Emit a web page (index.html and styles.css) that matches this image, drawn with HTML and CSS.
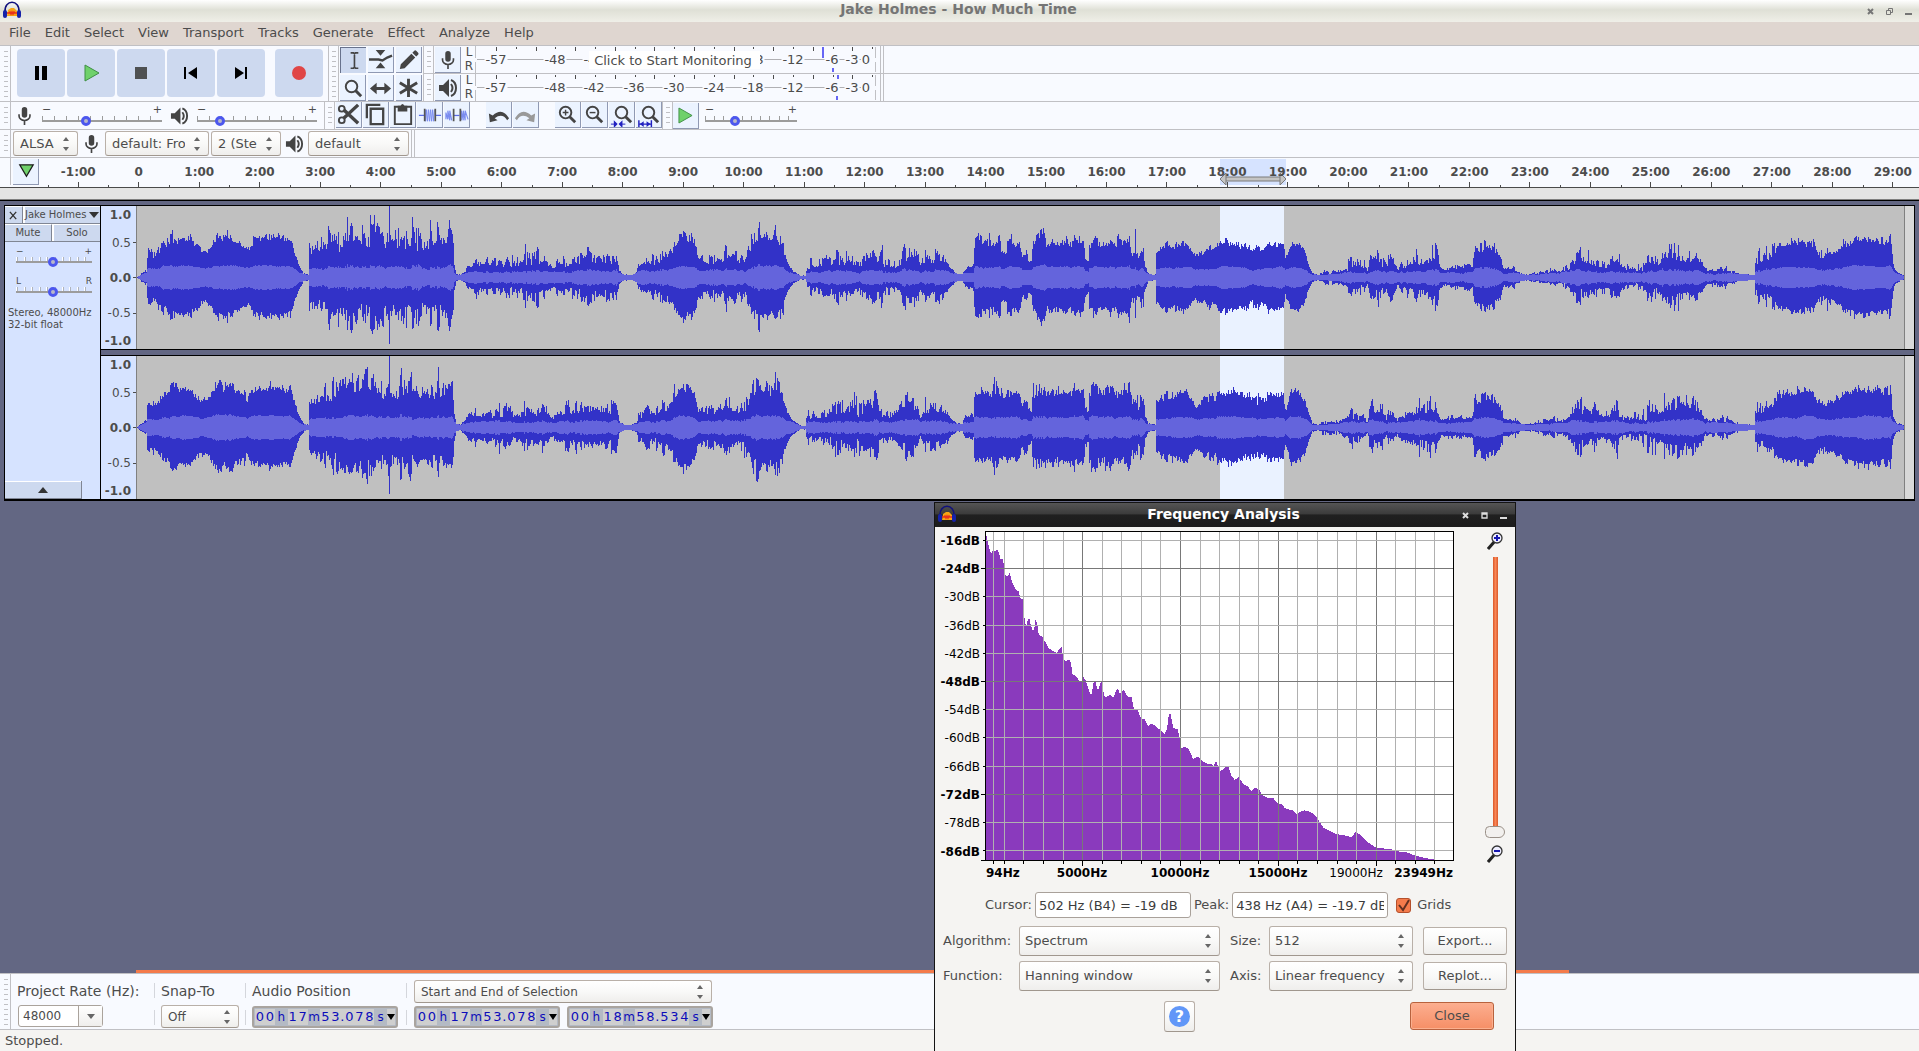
FILE: index.html
```html
<!DOCTYPE html>
<html lang="en">
<head>
<meta charset="utf-8">
<title>Jake Holmes - How Much Time</title>
<link rel="stylesheet" href="styles.css">
</head>
<body>
<svg class="defs" aria-hidden="true">
  <symbol id="logo" viewBox="0 0 20 20">
    <path d="M3 11C2 -2 18 -2 17 11" fill="none" stroke="#10107c" stroke-width="1.5"/>
    <path d="M5 15l1-6 3-2 3 0 3 3 0 5z" fill="#f7a414"/>
    <path d="M5 12h2l1-1 1 2 1-2 1 2 1-2 1 1h3" fill="none" stroke="#e8301c" stroke-width="1.6"/>
    <rect x="1" y="9" width="4" height="8" rx="2" fill="#1622a8"/><rect x="15" y="9" width="4" height="8" rx="2" fill="#1622a8"/>
  </symbol>
  <symbol id="mic" viewBox="0 0 18 22"><rect x="6" y="1" width="6" height="12" rx="3"/><path d="M3 9v2a6 5 0 0 0 12 0V9M9 16v5" fill="none" stroke="currentColor" stroke-width="1.8"/></symbol>
  <symbol id="speaker" viewBox="0 0 20 20"><path d="M1 7h4l6-6v18l-6-6H1z"/><path d="M13 6q3 4 0 8M13 2q5 2 5 8t-5 8" fill="none" stroke="currentColor" stroke-width="2"/></symbol>
  <symbol id="ibeam" viewBox="0 0 26 26"><path d="M10 5h3l1 1 1-1h3M10 21h3l1-1 1 1h3M14 6v14" fill="none" stroke="currentColor" stroke-width="1.7"/></symbol>
  <symbol id="envelope" viewBox="0 0 26 26"><path d="M8 3h10l-5 6zM8 22h10l-5-6z"/><path d="M1 13h10l4 1 5-3 5-2" fill="none" stroke="currentColor" stroke-width="2.500"/></symbol>
  <symbol id="pencil" viewBox="0 0 26 26"><path d="M4 23l1-5L16 7l4 4L9 22zM17 6l2-2q1-1 2 0l2 2q1 1 0 2l-2 2z"/></symbol>
  <symbol id="lens" viewBox="0 0 26 26"><circle cx="11" cy="11" r="6" fill="none" stroke="currentColor" stroke-width="2"/><path d="M15 15l6 6" stroke="currentColor" stroke-width="3"/></symbol>
  <symbol id="shift" viewBox="0 0 26 26"><path d="M2 14l7-6v4.500h8V8l7 6-7 6v-4.500H9V20z"/></symbol>
  <symbol id="star" viewBox="0 0 26 26"><path d="M13 4v19M4 8l18 11M22 8L4 19" stroke="currentColor" stroke-width="3"/></symbol>
  <symbol id="cut" viewBox="0 0 26 26"><path d="M23 3L8 17M23 22L8 8" stroke="currentColor" stroke-width="3.500"/><circle cx="6" cy="7" r="3" fill="none" stroke="currentColor" stroke-width="2"/><circle cx="6" cy="19" r="3" fill="none" stroke="currentColor" stroke-width="2"/></symbol>
  <symbol id="copy" viewBox="0 0 26 26"><path d="M4 17V3h14M8 7h13v16H8z" fill="none" stroke="currentColor" stroke-width="2.400"/></symbol>
  <symbol id="paste" viewBox="0 0 26 26"><path d="M5 5h17v18H5z" fill="none" stroke="currentColor" stroke-width="2"/><path d="M8 4h3q2-4 4 0h3v6H8z"/></symbol>
  <symbol id="trim" viewBox="0 0 26 26"><path d="M2 14h6M19 14h6" stroke="#5b6be6" stroke-width="1.300"/><path d="M9 8v12l1-12 1 12 1-12 1 12 1-12 1 12 1-12 1 12 1-12" fill="none" stroke="#7b8cf0" stroke-width="1"/><path d="M8 7v13M19 7v13" stroke="#555" stroke-width="1.800"/></symbol>
  <symbol id="silence" viewBox="0 0 26 26"><path d="M2 18v-7l2 7V9l2 10V9l2 10M18 19V9l2 10V9l2 10V9l3 9" fill="none" stroke="#7b8cf0" stroke-width="1.200"/><path d="M10 14h6" stroke="#5b6be6" stroke-width="1.300"/><path d="M10 7v13M17 7v13" stroke="#555" stroke-width="1.800"/></symbol>
  <symbol id="undo" viewBox="0 0 26 26"><path d="M3 12l1 9 8-2-3-2q8-6 13 2l2-2Q17 5 7 14z"/></symbol>
  <symbol id="redo" viewBox="0 0 26 26"><path d="M23 12l-1 9-8-2 3-2q-8-6-13 2l-2-2Q9 5 19 14z"/></symbol>
  <symbol id="play" viewBox="0 0 16 18"><path d="M1 1l14 8-14 8z" fill="#6fd16b" stroke="#3f8f45" stroke-width="1"/></symbol>
  <symbol id="dlens" viewBox="0 0 16 18"><path d="M8 9l-7 8" stroke="#222" stroke-width="3"/><circle cx="10" cy="6" r="5" fill="#eef" stroke="#333" stroke-width="1.300"/></symbol>
</svg>

<header class="titlebar">
  <svg class="logo"><use href="#logo"/></svg>
  <h1>Jake Holmes - How Much Time</h1>
  <div class="wm">
    <svg viewBox="0 0 7 7"><path d="M1 1l5 5M6 1L1 6" stroke="currentColor" stroke-width="2"/></svg>
    <svg viewBox="0 0 7 7"><path d="M.5 2.500h4v4h-4zM2.500 2.500v-2h4v4h-2" fill="none" stroke="currentColor"/></svg>
    <svg viewBox="0 0 7 7"><path d="M0 6h7" stroke="currentColor" stroke-width="2"/></svg>
  </div>
</header>
<nav class="menu">
  <a href="#">File</a><a href="#">Edit</a><a href="#">Select</a><a href="#">View</a><a href="#">Transport</a><a href="#">Tracks</a><a href="#">Generate</a><a href="#">Effect</a><a href="#">Analyze</a><a href="#">Help</a>
</nav>

<div class="dock">
  <i class="grip"></i>
  <div class="transport">
    <button aria-label="Pause"><svg viewBox="0 0 48 48"><path d="M18 17h4v14h-4zM25 17h5v14h-5z" fill="#000"/></svg></button>
    <button aria-label="Play"><svg viewBox="0 0 48 48"><path d="M18 16l14 8-14 8z" fill="#6fd16b" stroke="#3f8f45"/></svg></button>
    <button aria-label="Stop"><svg viewBox="0 0 48 48"><path d="M18 18h12v12H18z" fill="#4f5152"/></svg></button>
    <button aria-label="Skip to start"><svg viewBox="0 0 48 48"><path d="M17 18h2v12h-2zM30 18v12l-9-6z" fill="#000"/></svg></button>
    <button aria-label="Skip to end"><svg viewBox="0 0 48 48"><path d="M28 18h2v12h-2zM18 18v12l9-6z" fill="#000"/></svg></button>
    <button class="record" aria-label="Record"><svg viewBox="0 0 48 48"><circle cx="24" cy="24" r="7" fill="#e04646"/></svg></button>
  </div>
  <i class="grip"></i>
  <div class="tools">
    <button class="tb on" aria-label="Selection"><svg><use href="#ibeam"/></svg></button>
    <button class="tb" aria-label="Envelope"><svg><use href="#envelope"/></svg></button>
    <button class="tb" aria-label="Draw"><svg><use href="#pencil"/></svg></button>
    <button class="tb" aria-label="Zoom"><svg viewBox="0 0 26 26"><use href="#lens" x="1" y="1" width="26" height="26"/></svg></button>
    <button class="tb" aria-label="Time shift"><svg><use href="#shift"/></svg></button>
    <button class="tb" aria-label="Multi"><svg><use href="#star"/></svg></button>
  </div>
  <div class="meters">
    <div class="meterbar"><i class="grip"></i><button class="tb" aria-label="Record meter"><svg class="s20"><use href="#mic"/></svg></button><div class="lr"><span>L</span><span>R</span></div><svg class="meter" data-kind="rec"></svg><i class="end"></i></div>
    <div class="meterbar"><i class="grip"></i><button class="tb" aria-label="Playback meter"><svg class="s20"><use href="#speaker"/></svg></button><div class="lr"><span>L</span><span>R</span></div><svg class="meter" data-kind="play"></svg><i class="end"></i></div>
  </div>
</div>

<div class="dock">
  <i class="grip"></i>
  <div class="mixer">
    <svg class="ico"><use href="#mic"/></svg>
    <label class="slider"><span>−</span><span>+</span><input type="range" aria-label="Recording volume" min="0" max="100" value="35"></label>
    <svg class="ico"><use href="#speaker"/></svg>
    <label class="slider"><span>−</span><span>+</span><input type="range" aria-label="Playback volume" min="0" max="100" value="16"></label>
  </div>
  <i class="grip"></i>
  <div class="edit">
    <button class="tb" aria-label="Cut"><svg><use href="#cut"/></svg></button>
    <button class="tb" aria-label="Copy"><svg><use href="#copy"/></svg></button>
    <button class="tb" aria-label="Paste"><svg><use href="#paste"/></svg></button>
    <button class="tb" aria-label="Trim"><svg><use href="#trim"/></svg></button>
    <button class="tb" aria-label="Silence"><svg><use href="#silence"/></svg></button>
    <button class="tb apart" aria-label="Undo"><svg><use href="#undo"/></svg></button>
    <button class="tb dim" aria-label="Redo"><svg><use href="#redo"/></svg></button>
    <button class="tb apart" aria-label="Zoom in"><svg viewBox="0 0 26 26"><use href="#lens" width="26" height="26"/><path d="M8 11h6M11 8v6" stroke="currentColor" stroke-width="1.500"/></svg></button>
    <button class="tb" aria-label="Zoom out"><svg viewBox="0 0 26 26"><use href="#lens" width="26" height="26"/><path d="M8 11h6" stroke="currentColor" stroke-width="1.500"/></svg></button>
    <button class="tb" aria-label="Fit selection"><svg viewBox="0 0 26 26"><use href="#lens" x="2" width="26" height="26"/><path d="M2 23h5M11 23h6" stroke="#2020c0"/><path d="M5 19l4 4-4 4zM14 19l-4 4 4 4z" fill="#2020c0"/></svg></button>
    <button class="tb" aria-label="Fit project"><svg viewBox="0 0 26 26"><use href="#lens" x="2" width="26" height="26"/><path d="M3 19v7M16 19v7M3 23h13" stroke="#2020c0" stroke-width="1.500"/><path d="M4 23l4-3v6zM15 23l-4-3v6z" fill="#2020c0"/></svg></button>
  </div>
  <i class="grip"></i>
  <div class="speed">
    <button class="tb" aria-label="Play at speed"><svg class="s18"><use href="#play"/></svg></button>
    <label class="slider"><span>−</span><span>+</span><input type="range" aria-label="Playback speed" min="0" max="100" value="30"></label>
  </div>
</div>

<div class="dock device">
  <i class="grip"></i>
  <select class="sel w-host" aria-label="Audio host"><option>ALSA</option></select>
  <svg class="ico"><use href="#mic"/></svg>
  <select class="sel w-rec" aria-label="Recording device"><option>default: Front Mic:0</option></select>
  <select class="sel w-ch" aria-label="Recording channels"><option>2 (Stereo) Recording Channels</option></select>
  <svg class="ico"><use href="#speaker"/></svg>
  <select class="sel w-play" aria-label="Playback device"><option>default</option></select>
  <i class="end"></i>
</div>

<div class="ruler">
  <i class="gutter"></i>
  <button class="tb pin" aria-label="Pinned play head"><svg viewBox="0 0 26 26"><path d="M7 6h14l-7 12z" fill="#6fd16b" stroke="#1c1c1c" stroke-width="1.300"/></svg></button>
  <div class="scale" id="scale"></div>
  <div class="region"><svg viewBox="0 0 66 12" preserveAspectRatio="none"><path d="M5 4h56v4H5z" fill="#c4c4c4" stroke="#7a7a7a"/><path d="M6 0v12L0 6zM60 0v12l6-6z" fill="#c4c4c4" stroke="#7a7a7a"/></svg></div>
</div>
<div class="scrub"></div>

<main class="workspace">
  <section class="track">
    <aside class="panel">
      <div class="prow"><button class="close" aria-label="Close track"><svg viewBox="0 0 10 10"><path d="M1 1l7 8M8 1L1 9" stroke="#333" stroke-width="1.500"/></svg></button><button class="name">Jake Holmes<i></i></button></div>
      <div class="prow half"><button>Mute</button><button>Solo</button></div>
      <label class="slider white"><span>−</span><span>+</span><input type="range" aria-label="Gain" min="0" max="100" value="49"></label>
      <label class="slider white"><span>L</span><span>R</span><input type="range" aria-label="Pan" min="0" max="100" value="49"></label>
      <p>Stereo, 48000Hz<br>32-bit float</p>
      <button class="collapse" aria-label="Collapse"><i></i></button>
    </aside>
    <div class="channels">
      <div class="channel">
        <ul class="amp"><li><b>1.0</b></li><li class="t">0.5</li><li class="t z"><b>0.0</b></li><li class="t">-0.5</li><li><b>-1.0</b></li></ul>
        <svg class="wave" data-seed="11" viewBox="0 0 1767 143" preserveAspectRatio="none"></svg><i class="tail"></i>
      </div>
      <div class="channel">
        <ul class="amp"><li><b>1.0</b></li><li class="t">0.5</li><li class="t z"><b>0.0</b></li><li class="t">-0.5</li><li><b>-1.0</b></li></ul>
        <svg class="wave" data-seed="47" viewBox="0 0 1767 143" preserveAspectRatio="none"></svg><i class="tail"></i>
      </div>
    </div>
  </section>
  <div class="hscroll"></div>
</main>

<footer class="selection">
  <i class="grip"></i>
  <div class="cell rate"><label for="rate">Project Rate (Hz):</label><div class="combo"><input id="rate" type="text" value="48000"><button aria-label="Choose rate"><i></i></button></div></div>
  <div class="cell snap"><label for="snap">Snap-To</label><select id="snap" class="sel small"><option>Off</option></select></div>
  <div class="cell pos"><span>Audio Position</span><div class="time" data-time="00h17m53.078s"></div></div>
  <div class="cell range"><select class="sel small wide" aria-label="Selection mode"><option>Start and End of Selection</option></select><div class="times"><div class="time" data-time="00h17m53.078s"></div><div class="time" data-time="00h18m58.534s"></div></div></div>
</footer>
<div class="status">Stopped.</div>

<section class="dialog">
  <header><svg class="logo"><use href="#logo"/></svg><h2>Frequency Analysis</h2>
    <div class="wm">
      <svg viewBox="0 0 7 7"><path d="M1 1l5 5M6 1L1 6" stroke="currentColor" stroke-width="2"/></svg>
      <svg viewBox="0 0 7 7"><path d="M1 1h5v5H1zM1 2h5" fill="none" stroke="currentColor" stroke-width="1.300"/></svg>
      <svg viewBox="0 0 7 7"><path d="M0 6h7" stroke="currentColor" stroke-width="2"/></svg>
    </div>
  </header>
  <div class="plot">
    <svg id="chart" class="chart" viewBox="0 0 521 356"></svg>
    <div class="vzoom">
      <svg class="dl" viewBox="0 0 16 18"><use href="#dlens" width="16" height="18"/><path d="M7 6h6M10 3v6" stroke="#1515b0" stroke-width="2"/></svg>
      <input type="range" aria-label="Vertical zoom" min="0" max="100" value="100">
      <svg class="dl" viewBox="0 0 16 18"><use href="#dlens" width="16" height="18"/><path d="M7 6h6" stroke="#1515b0" stroke-width="2"/></svg>
    </div>
  </div>
  <div class="readout">
    <label for="cur">Cursor:</label><input id="cur" type="text" value="502 Hz (B4) = -19 dB" readonly>
    <label for="peak">Peak:</label><input id="peak" type="text" value="438 Hz (A4) = -19.7 dB" readonly>
    <label class="grids"><input type="checkbox" checked>Grids</label>
  </div>
  <div class="form">
    <label for="alg">Algorithm:</label><select id="alg" class="sel"><option>Spectrum</option></select>
    <label for="size">Size:</label><select id="size" class="sel"><option>512</option></select>
    <button class="btn">Export...</button>
    <label for="fun">Function:</label><select id="fun" class="sel"><option>Hanning window</option></select>
    <label for="axis">Axis:</label><select id="axis" class="sel"><option>Linear frequency</option></select>
    <button class="btn">Replot...</button>
  </div>
  <div class="actions"><button class="btn help" aria-label="Help"><b>?</b></button><button class="btn primary">Close</button></div>
</section>
<script src="app.js"></script>
</body>
</html>
```
FILE: styles.css
```css
* { box-sizing: border-box; }
html, body { height: 100%; }
body { margin: 0; display: flex; flex-direction: column; position: relative; overflow: hidden; background: #636783; color: #4c4c4c; font: 13px/16px "DejaVu Sans", sans-serif; }
button, input, select { font: inherit; color: inherit; margin: 0; padding: 0; border: 0; border-radius: 0; background: none; }
svg { display: block; fill: currentColor; }
.defs { position: absolute; width: 0; height: 0; }

.titlebar { height: 22px; flex: none; display: flex; align-items: center; padding: 0 7px 0 2px; background: linear-gradient(#fff, #dfe0d6 45%, #efefe8); color: #757575; }
.titlebar h1 { flex: 1; margin: 0; font-size: 14px; line-height: 18px; padding: 0 0 4px 28px; text-align: center; }
.logo { width: 20px; height: 20px; }
.wm { display: flex; gap: 12px; align-items: center; }
.wm svg { width: 7px; height: 7px; }
.menu { height: 24px; flex: none; display: flex; gap: 14px; align-items: center; padding: 0 9px 1px; background: #dfd6d0; border-bottom: 1px solid #c0c0c4; }
.menu a { color: inherit; text-decoration: none; }

.dock { display: flex; flex: none; background: #f8faff; border-bottom: 1px solid #c0c0c4; min-height: 28px; }
.grip { flex: none; width: 11px; border: solid #c0c0c4; border-width: 0 1px; position: relative; background: repeating-linear-gradient(#c0c0c4 0 1px, transparent 1px 5px) 3px 5px / 4px calc(100% - 9px) no-repeat; }
.dock > .grip:first-child, .selection > .grip { border-left-color: transparent; }
.end { width: 4px; border: solid #c0c0c4; border-width: 0 1px; margin-left: 4px; }
.transport { display: flex; gap: 2px; padding: 3px 5px 4px 6px; }
.transport button { width: 48px; height: 48px; border-radius: 4px; background: #cdd9ef; }
.transport .record { margin-left: 8px; }
.tools { display: grid; grid-template-columns: repeat(3, 26px); gap: 2px; padding: 1px 1px 0; }
.tb { width: 26px; height: 26px; flex: none; display: flex; align-items: center; justify-content: center; background: #ebf3ff; border: solid #8f99b3; border-width: 0 1px 1px 0; color: #444; }
.tb svg { width: 25px; height: 25px; }
.tb .s20 { width: 20px; height: 20px; }
.tb .s18 { width: 15px; height: 17px; }
.tb.on { background: #cdd9ef; border-color: #68728c; border-width: 1px 0 0 1px; }
.dim { color: #999; }
.meters { flex: 1; }
.meterbar { display: flex; height: 27px; }
.meterbar + .meterbar { border-top: 1px solid #c0c0c4; height: 28px; }
.meterbar .tb { margin: 1px 0 0 1px; }
.lr { width: 12px; margin-left: 2px; display: grid; text-align: center; font-size: 12px; line-height: 13px; }
.meter { width: 402px; height: 27px; font-size: 13px; }
.meterbar .end { margin-left: 3px; }

.mixer { display: flex; align-items: center; gap: 7px; padding: 0 6px 0 4px; }
.ico { width: 19px; height: 20px; flex: none; color: #444; }
.slider { display: flex; flex-wrap: wrap; justify-content: space-between; align-content: flex-start; width: 122px; padding: 0 1px 1px; font-size: 11px; line-height: 10px; }
.slider input { appearance: none; width: 100%; height: 10px; background: linear-gradient(#9c9c9c, #9c9c9c) 0 5px / 100% 2px no-repeat, repeating-linear-gradient(90deg, #9c9c9c 0 1px, transparent 1px 10%) 0 1px / 100% 4px no-repeat; }
.slider input::-webkit-slider-thumb { appearance: none; width: 10px; height: 10px; margin-top: 2px; border: 3px solid #4c57ee; border-radius: 50%; background: #b8b8c8; }
.slider.white input { background: linear-gradient(#9c9c9c, #9c9c9c) 0 5px / 100% 2px no-repeat, repeating-linear-gradient(90deg, #fff 0 1px, #b0b4bc 1px 2px, transparent 2px 10%) 0 1px / 100% 4px no-repeat; }
.edit { display: flex; padding-left: 1px; gap: 1px; }
.edit .apart { margin-left: 15px; }
.speed { display: flex; gap: 5px; align-items: center; }
.speed .slider { width: 94px; }

.sel { appearance: none; height: 25px; padding: 0 23px 0 6px; border: 1px solid #b9b0a8; border-bottom-color: #a0978e; border-radius: 3px; background: url("data:image/svg+xml,%3Csvg xmlns='http://www.w3.org/2000/svg' width='8' height='14'%3E%3Cpath d='M1 4l3-4 3 4zM1 10l3 4 3-4z' fill='%23666'/%3E%3C/svg%3E") right 7px center no-repeat, linear-gradient(#fff, #f9f9f8 50%, #efeeec); text-overflow: clip; overflow: hidden; white-space: nowrap; }
.device { align-items: center; }
.device .grip, .device .end { align-self: stretch; }
.device .end { margin-left: 2px; }
.device .ico { margin: 0 4px; }
.w-host { width: 65px; margin-left: 2px; }
.w-rec { width: 104px; margin-right: 2px; }
.w-ch { width: 70px; }
.w-play { width: 101px; }

.ruler { display: flex; flex: none; position: relative; height: 30px; overflow: hidden; background: #f8faff; border-bottom: 1px solid #4a4a4a; }
.gutter { width: 11px; border-right: 1px solid #c0c0c4; margin-bottom: 2px; }
.ruler .pin { margin: 1px 0 0 2px; }
.scale { flex: 1; display: flex; margin: 0 -4px 0 9px; position: relative; z-index: 1; }
.scale span { flex: 1 1 0; text-align: center; font-weight: bold; font-size: 12px; line-height: 28px; height: 29px; background: linear-gradient(#4a4a4a, #4a4a4a) 50% 100% / 1px 5px no-repeat, linear-gradient(#4a4a4a, #4a4a4a) 0 100% / 1px 2px no-repeat; }
.region { position: absolute; left: 63.6%; width: 66px; top: 1px; bottom: 2px; background: #d6e3ff; }
.region svg { position: absolute; left: 0; bottom: 0; width: 100%; height: 12px; }
.scrub { flex: none; height: 13px; background: #e4e4e4; border-bottom: 1px solid #000; box-shadow: inset 0 -1px #808080; }

.workspace { flex: 1; display: flex; flex-direction: column; justify-content: space-between; padding: 4px 4px 0; }
.track { display: flex; border: 1px solid #000; border-width: 1px 1px 2px; }
.panel { width: 96px; display: flex; flex-direction: column; background: #d6e3ff; border-right: 1px solid #000; font-size: 10px; line-height: 12px; }
.prow { display: flex; height: 18px; gap: 2px; border-bottom: 1px solid #808694; background: #fff; }
.prow button { background: #cdd9ef; border-right: 1px solid #808694; border-top: 1px solid #fff; display: flex; align-items: center; justify-content: center; }
.prow .close { width: 18px; }
.prow svg { width: 9px; height: 9px; }
.prow .name { flex: 1; justify-content: space-between; padding: 0 1px 0 0; border-right: 0; white-space: nowrap; }
.half button { flex: 1; }
.half button:last-child { border-right: 0; }
.name i { border: 5px solid transparent; border-top: 6px solid #333; border-bottom: 0; }
.panel .slider { width: 78px; margin: 4px 0 0 10px; padding: 0 1px; font-size: 9px; line-height: 10px; height: 26px; }
.panel p { margin: 5px 0 0 3px; white-space: nowrap; }
.collapse { margin-top: auto; width: 77px; height: 18px; background: #cdd9ef; border: solid #808694; border-width: 0 1px 1px 0; box-shadow: inset 0 1px #fff; display: flex; align-items: center; justify-content: center; }
.collapse i { border: 5px solid transparent; border-bottom: 6px solid #333; border-top: 0; }
.channels { flex: 1; }
.channel { display: flex; height: 143px; background: #c0c0c0; }
.channel + .channel { margin-top: 7px; box-shadow: 0 -1px #000, 0 -6px #636783, 0 -7px #000; }
.amp { width: 36px; flex: none; margin: 0; padding: 0; list-style: none; background: #d6e3ff; border-right: 1px solid #808080; font-size: 12px; display: grid; grid-template-rows: 17px 39px 31px 40px 16px; }
.amp li { position: relative; display: flex; justify-content: flex-end; align-items: center; padding-right: 5px; }
.amp .t::after { content: ""; position: absolute; right: 0; width: 3px; height: 1px; background: #4c4c4c; }
.wave { flex: 1; min-width: 0; height: 143px; }
.tail { width: 10px; background: #d8d8d8; border-left: 1px solid #808080; }
.hscroll { height: 3px; margin-left: 132px; width: 75%; background: #f47b4b; }

.selection { flex: none; display: flex; background: #f8faff; border: solid #c0c0c4; border-width: 1px 0; height: 57px; }
.cell { display: flex; flex-direction: column; justify-content: space-between; padding: 8px 7px 1px 6px; background: linear-gradient(#d4d6dc 0 35%, transparent 35% 64%, #d4d6dc 64%) 100% 9px / 1px 42px no-repeat; font-size: 14px; line-height: 18px; }
.cell.range { padding: 6px 7px 1px; background: none; }
.combo { display: flex; width: 85px; height: 22px; margin: 0 0 1px 1px; border: 1px solid #aaa39c; border-radius: 3px; background: #fff; font-size: 12px; }
.combo input { width: 59px; padding-left: 4px; }
.combo button { flex: 1; border-left: 1px solid #aaa39c; background: linear-gradient(#fff, #efeeec); display: flex; align-items: center; justify-content: center; }
.combo i { border: 4px solid transparent; border-top: 5px solid #666; border-bottom: 0; }
.rate { width: 144px; white-space: nowrap; }
.snap { width: 91px; }
.pos { width: 161px; }
.small { font-size: 12px; height: 23px; }
.wide { width: 298px; }
.times { display: flex; gap: 7px; }
.time { display: flex; width: 146px; height: 22px; padding: 1px; border: 2px solid #a9a49f; border-radius: 3px; background: #b4bac4; color: #0c0cba; font-size: 12px; line-height: 16px; }
.time b { width: 10px; flex: none; text-align: center; font-weight: normal; font-size: 13px; background: #cfcfcf; }
.time b.dot { width: 4px; }
.time em { flex: 1; text-align: center; font-style: normal; }
.time i { width: 8px; background: #cfcfcf; display: flex; align-items: center; justify-content: center; }
.time i::after { content: ""; border: 4px solid transparent; border-top: 6px solid #000; border-bottom: 0; }
.status { flex: none; height: 21px; padding: 3px 5px; background: #f5f4f2; }

.dialog { position: absolute; left: 934px; top: 502px; bottom: 0; width: 582px; display: flex; flex-direction: column; background: #f5f4f2; border: solid #141414; border-width: 1px 1px 0; }
.dialog header { display: flex; align-items: center; height: 24px; padding: 0 8px 0 2px; background: linear-gradient(#555, #3c3c3c 45%, #202020 50%, #1c1c1c); color: #fff; }
.dialog h2 { flex: 1; margin: 0; font-size: 14px; line-height: 18px; padding: 0 0 3px 28px; text-align: center; }
.dialog .wm { color: #ddd; }
.plot { display: flex; justify-content: space-between; height: 356px; }
.chart { width: 521px; height: 356px; flex: none; font-size: 12px; fill: #000; }
.vzoom { width: 32px; margin-right: 4px; display: flex; flex-direction: column; align-items: center; padding: 5px 0 20px; }
.vzoom input { appearance: none; writing-mode: vertical-lr; width: 20px; flex: 1; margin: 4px 0 7px; background: linear-gradient(90deg, #d9582a, #fa8656, #d9582a) 50% 3px / 5px calc(100% - 8px) no-repeat; }
.vzoom input::-webkit-slider-thumb { appearance: none; width: 20px; height: 12px; border: 1px solid #9a9088; border-radius: 6px 8px 8px 6px; background: #f2f0ee; }
.dl { width: 16px; height: 18px; flex: none; }
.readout { display: flex; align-items: center; gap: 3px; padding: 9px 0 0 50px; }
.readout input[type=text] { width: 156px; height: 26px; padding: 0 3px; border: 1px solid #a9a19a; border-radius: 3px; background: #fff; color: #3c3c3c; }
.grids { display: flex; align-items: center; gap: 6px; margin-left: 5px; }
.grids input { appearance: none; width: 15px; height: 15px; border: 1px solid #b4502c; border-radius: 3px; background: url("data:image/svg+xml,%3Csvg xmlns='http://www.w3.org/2000/svg' width='13' height='13'%3E%3Cpath d='M2 6l4 5 6-10' fill='none' stroke='%23603020' stroke-width='2'/%3E%3C/svg%3E") center no-repeat, #f47b4b; }
.form { display: grid; grid-template-columns: 76px 201px 39px 144px 83px; column-gap: 0; row-gap: 5px; padding: 8px 8px 0; align-items: center; }
.form .sel { height: 30px; padding-left: 5px; }
.form label:nth-of-type(even) { padding-left: 10px; margin-right: -10px; }
.form .sel:nth-of-type(even) { margin-left: 10px; margin-right: -10px; }
.form .btn { margin-left: 20px; width: 84px; }
.btn { height: 28px; border: 1px solid #b9b0a8; border-bottom-color: #a0978e; border-radius: 3px; background: linear-gradient(#fff, #f9f9f8 50%, #efeeec); }
.actions { display: flex; justify-content: space-between; padding: 10px 21px 0 229px; align-items: flex-start; }
.help { width: 31px; height: 31px; display: flex; align-items: center; justify-content: center; }
.help b { width: 21px; height: 21px; border-radius: 50%; background: #6197f8; color: #fff; font-size: 16px; line-height: 21px; }
.primary { width: 84px; border-color: #b8623e; background: linear-gradient(#fcae90, #f68f66); box-shadow: inset 0 0 0 1px #fbb08f; margin-top: 1px; }
```
FILE: app.js
```js
// Time ruler: one cell per minute, tick in the middle, half-minute tick on the edge
const scale = document.getElementById('scale');
for (let m = -1; m < 30; m++) {
  const s = document.createElement('span');
  s.textContent = m === 0 ? '0' : m + ':00';
  scale.append(s);
}

// Time fields
document.querySelectorAll('.time').forEach(el => {
  el.innerHTML = [...el.dataset.time].map(c =>
    /\d/.test(c) ? `<b>${c}</b>` : c === '.' ? '<b class="dot">.</b>' : `<em>${c}</em>`).join('') + '<i></i>';
});

// Level meters; the monitoring prompt hides the labels under it
const marks = [[21, '-57'], [80, '-48'], [119, '-42'], [159, '-36'], [199, '-30'], [239, '-24'], [278, '-18'], [318, '-12'], [357, '-6'], [377, '-3'], [391, '0']];
document.querySelectorAll('.meter').forEach(el => {
  const rec = el.dataset.kind === 'rec';
  let h = '<path d="M.5 0v12M.5 16v11M400.500 1v11M400.500 16v10" stroke="#c0c0c4"/><path d="M2 13.500h394" stroke="#b0b0b4"/>';
  for (let i = 0; i < 20; i++) h += `<rect x="${21 + Math.round(i * 19.8)}" y="1" width="1" height="${i % 2 ? 2 : 4}" fill="#4c4c4c"/>`;
  marks.forEach(([x, t]) => {
    if (rec && x > 150 && x < 250) return;
    const w = t.length * 8 + (t.length > 1 ? -1 : 2);
    h += `<rect x="${x - w / 2}" y="6" width="${w}" height="14" fill="#f8faff"/><text x="${x}" y="18" text-anchor="middle">${t}</text>`;
  });
  if (rec) {
    h += '<rect x="347" y="1" width="2" height="11" fill="#6666f5"/><rect x="357" y="22" width="2" height="4" fill="#6666f5"/>';
    h += '<rect x="114" y="5" width="171" height="18" fill="#fff"/><text x="198" y="19" text-anchor="middle">Click to Start Monitoring</text>';
  } else {
    h += '<rect x="362" y="1" width="2" height="4" fill="#6666f5"/><rect x="361" y="22" width="2" height="4" fill="#6666f5"/>';
  }
  el.innerHTML = h;
});

// Waveform envelope: column, solid level, highest peak
const env = `137 0 1,143 3 6,146 5 10,147 20 30,155 22 30,160 26 38,163 30 46,172 34 48,180 38 44,190 38 45,197 28 36,205 24 30,213 32 45,220 36 52,230 38 48,240 33 45,248 26 34,254 36 46,265 39 46,275 40 46,290 36 45,295 22 26,299 10 12,303 3 5,308 2 3,309 24 38,320 24 44,330 26 58,340 28 62,350 38 62,360 30 62,380 30 64,400 30 62,420 26 56,430 28 62,445 30 58,452 38 60,454 12 18,456 3 4,460 2 4,465 5 8,468 10 15,476 12 23,485 10 20,500 10 27,515 10 22,525 11 32,540 12 32,546 14 34,548 12 16,552 7 12,556 10 19,570 11 30,580 12 27,587 17 36,595 14 24,602 14 28,612 12 28,616 18 28,619 5 7,624 2 3,632 2 3,636 4 8,638 8 18,645 11 25,655 12 28,666 16 28,672 24 35,674 31 50,683 36 50,690 36 48,695 27 40,698 16 25,705 14 24,713 12 24,718 18 32,722 12 20,726 18 40,735 15 28,745 15 32,750 26 47,757 35 58,765 38 50,772 33 42,775 32 58,782 30 52,784 23 28,787 14 17,793 5 8,800 1 2,805 1 2,807 8 20,820 9 27,830 10 32,845 10 34,860 10 34,870 18 38,880 10 38,885 8 22,895 9 20,902 15 38,910 18 38,917 18 34,920 9 16,925 13 30,935 14 30,945 14 26,949 9 12,953 5 8,957 3 4,962 3 4,965 8 14,973 10 15,974 30 44,985 33 46,995 30 55,1000 27 42,1005 24 46,1010 31 45,1019 32 43,1022 17 27,1026 18 38,1031 14 20,1033 31 44,1040 29 54,1050 33 44,1065 32 43,1075 33 50,1083 34 48,1085 17 25,1088 15 24,1089 32 46,1100 32 47,1115 31 50,1129 33 50,1132 18 24,1135 22 52,1138 18 30,1142 22 46,1145 10 14,1148 3 5,1154 2 3,1155 2 3,1156 24 30,1160 25 32,1166 29 39,1175 30 39,1185 34 43,1190 29 37,1195 20 28,1205 25 36,1215 27 36,1220 34 45,1230 34 43,1240 31 38,1247 28 46,1254 22 34,1262 26 38,1270 32 40,1283 32 39,1285 16 20,1290 31 40,1298 33 43,1304 26 36,1308 12 16,1312 3 5,1318 2 3,1320 2 8,1335 3 9,1345 5 14,1352 7 25,1358 7 20,1363 9 28,1367 4 8,1370 12 30,1380 12 34,1386 6 15,1390 11 30,1397 6 12,1403 8 20,1412 11 27,1418 13 35,1425 13 35,1436 16 34,1441 7 11,1450 7 15,1460 7 15,1472 9 14,1474 22 36,1485 27 38,1493 24 36,1500 20 31,1503 8 13,1513 6 13,1520 3 5,1528 2 3,1535 3 7,1550 4 10,1560 5 12,1569 7 16,1570 12 30,1580 12 32,1595 12 34,1603 9 18,1610 10 20,1617 12 34,1622 7 14,1630 6 15,1640 6 18,1647 7 28,1655 9 32,1665 17 38,1680 17 38,1690 15 34,1700 16 34,1705 6 12,1715 5 11,1725 5 16,1732 4 8,1740 3 4,1754 2 2,1755 13 32,1762 13 35,1770 18 36,1778 28 42,1790 34 43,1800 35 44,1812 31 46,1818 20 28,1824 18 40,1830 22 30,1840 29 38,1850 35 43,1865 37 48,1880 34 43,1890 31 48,1893 10 16,1896 4 6,1904 1 2`
  .split(',').map(p => p.split(' ').map(Number));
const mid = 71;
document.querySelectorAll('.wave').forEach(el => {
  let seed = +el.dataset.seed;
  const rnd = () => (seed = (seed * 16807) % 2147483647) / 2147483647;
  for (let i = 0; i < 9; i++) rnd();
  let peak = '', rms = '', k = 0, drift = 0, run = 0;
  for (let x = 137; x < 1904; x++) {
    while (k < env.length - 2 && env[k + 1][0] <= x) k++;
    const [x0, b0, p0] = env[k], [x1, b1, p1] = env[k + 1], f = (x - x0) / (x1 - x0);
    const base = b0 + (b1 - b0) * f, top = p0 + (p1 - p0) * f;
    if (rnd() < 0.6) run = Math.pow(rnd(), 1.9);
    const amp = () => base * (0.9 + 0.1 * rnd()) + (top - base) * (run * 0.75 + Math.pow(rnd(), 2) * 0.35);
    const hit = x === 389;
    const u = Math.round(hit ? 71 : amp()), d = Math.round(hit ? 66 : amp() * 0.96);
    drift = drift * 0.8 + (rnd() - 0.5) * 1.3;
    const r = Math.round(Math.min(base, base * 0.22 + 2.5 + run * (top - base) * 0.1 + drift));
    peak += `M${x - 137} ${mid - u}h1v${u + d + 1}h-1z`;
    if (r > 0) rms += `M${x - 137} ${mid - r}h1v${2 * r + 1}h-1z`;
  }
  el.innerHTML = `<g shape-rendering="crispEdges"><rect x="1083" y="0" width="64" height="143" fill="#eaf2ff"/><path d="${peak}" fill="#3232c8"/><path d="${rms}" fill="#6464dc"/></g>`;
});

// Spectrum plot
const spectrum = `165 127,167 137,170 152,174 172,178 190,181 190,184 178,189 186,194 179,199 190,203 207,208 209,212 225,216 258,222 258,226 249,230 268,236 288,242 302,248 303,253 326,259 327,262 372,266 402,269 408,272 388,276 388,280 408,284 423,288 420,292 386,296 406,300 436,308 441,316 456,325 475,334 483,345 489,351 480,357 470,360 494,366 514,374 512,378 510,381 520,385 552,395 562,403 574,410 572,413 563,418 571,424 592,429 612,434 612,438 580,443 576,447 596,451 598,455 580,459 578,462 602,467 622,474 620,480 614,488 625,496 602,500 598,504 611,509 609,513 599,518 607,524 620,534 622,541 662,550 660,558 686,568 688,576 710,585 702,595 709,606 720,618 732,624 718,628 680,632 668,636 690,640 716,650 717,655 736,659 776,670 771,680 780,690 808,702 801,715 816,725 822,735 822,742 829,748 813,753 830,760 844,770 834,780 830,786 858,795 870,805 863,818 884,828 890,837 904,848 894,858 902,866 918,878 924,892 924,903 940,914 944,922 955,934 960,943 963,953 974,961 966,972 962,985 966,998 976,1006 990,1020 1014,1035 1023,1050 1033,1070 1036,1088 1042,1094 1040,1100 1026,1106 1029,1116 1040,1130 1056,1142 1066,1154 1075,1190 1078,1200 1084,1230 1088,1252 1098,1280 1106,1300 1108,1306 1112,1340 1113`
  .split(',').map(p => p.split(' ').map(Number)).map(([x, y]) => [(x - 165) / 2.529, (y - 127) / 3]);
const L = 50, T = 5, W = 469, H = 329;
let bars = '', q = 0;
for (let x = 0; x < 464; x++) {
  while (q < spectrum.length - 2 && spectrum[q + 1][0] <= x) q++;
  const [x0, y0] = spectrum[q], [x1, y1] = spectrum[q + 1];
  const y = Math.min(H, Math.round(y0 + (y1 - y0) * Math.min(1, (x - x0) / (x1 - x0))));
  bars += `M${L + x} ${T + y}h1V${T + H}h-1z`;
}
let c = `<rect x="${L}" y="${T}" width="${W}" height="${H}" fill="#fff"/><path d="${bars}" fill="#8a3abd"/>`;
const cols = [8, 19, 38, 58, 78, 97, 117, 136, 156, 175, 195, 215, 234, 254, 273, 293, 312, 332, 352, 371, 391, 410, 430, 449];
cols.forEach((x, i) => {
  const major = [5, 10, 15, 20].includes(i);
  c += `<rect x="${L + x}" y="${T}" width="1" height="${H}" fill="${major ? '#787878' : '#b0b0b0'}"/><rect x="${L + x}" y="${T + H}" width="1" height="${major ? 5 : 3}" fill="#000"/>`;
});
['-16', '-24', '-30', '-36', '-42', '-48', '-54', '-60', '-66', '-72', '-78', '-86'].forEach((t, i) => {
  const y = T + 8 + Math.round(i * 28.2), major = ['-24', '-48', '-72'].includes(t), bold = major || i === 0 || i === 11;
  c += `<rect x="${L}" y="${y}" width="${W}" height="1" fill="${major ? '#787878' : '#b0b0b0'}"/><rect x="${L - (major ? 4 : 2)}" y="${y}" width="${major ? 4 : 2}" height="1" fill="#000"/>`;
  c += `<text x="45" y="${y + (i === 11 ? 6 : 5)}" text-anchor="end"${bold ? ' font-weight="bold"' : ''}>${t}dB</text>`;
});
c += `<rect x="${L + .5}" y="${T - .5}" width="${W - 1}" height="${H}" fill="none" stroke="#000"/><rect x="${L - 4}" y="${T + H - 1}" width="4" height="1" fill="#000"/>`;
[[51, '94Hz', 1, 'start'], [147, '5000Hz', 1, 'middle'], [245, '10000Hz', 1, 'middle'], [343, '15000Hz', 1, 'middle'], [421, '19000Hz', 0, 'middle'], [518, '23949Hz', 1, 'end']].forEach(([x, t, b, a]) => {
  c += `<text x="${x}" y="350" text-anchor="${a}"${b ? ' font-weight="bold"' : ''}>${t}</text>`;
});
document.getElementById('chart').innerHTML = `<g shape-rendering="crispEdges">${c}</g>`;
```
